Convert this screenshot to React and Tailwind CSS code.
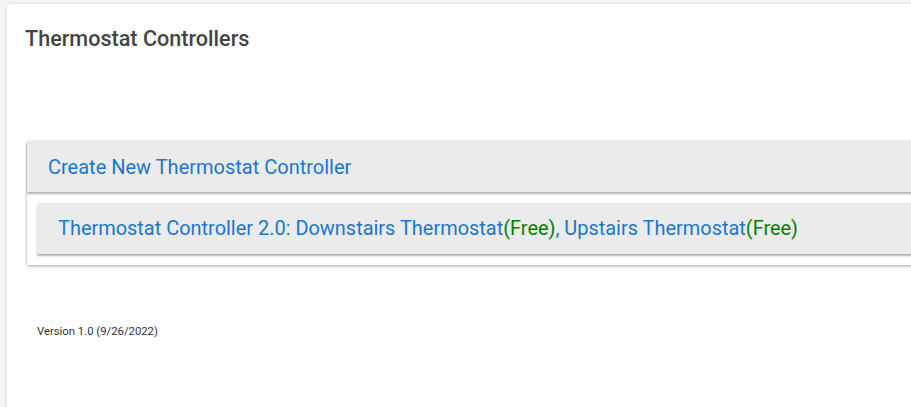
export default function App() {
  return (
    <div className="w-[911px] h-[407px] overflow-hidden bg-[#f4f4f4] pl-[7px] pt-[4px]" style={{ fontFamily: 'Roboto, "Liberation Sans", sans-serif' }}>
      <div className="w-[940px] h-[420px] bg-white rounded-[3px] shadow-[0_1px_4px_rgba(0,0,0,0.15)] pl-[18px] pt-[21px]">
        <h1 className="text-[21.6px] leading-[28px] font-medium text-[#444]">Thermostat Controllers</h1>
        <div className="mt-[88px] ml-[2px] bg-white shadow-[0_1px_3px_rgba(0,0,0,0.35)]">
          <div className="h-[51px] bg-[#ebebeb] flex items-center pl-[21px] shadow-[0_2px_2px_rgba(0,0,0,0.3)]">
            <span className="text-[20px] text-[#1976d2]">Create New Thermostat Controller</span>
          </div>
          <div className="px-[10px] py-[11px]">
            <div className="h-[51px] bg-[#ebebeb] flex items-center pl-[21px] rounded-[2px] shadow-[0_2px_2px_rgba(0,0,0,0.3)]">
              <span className="text-[19.95px] text-[#1976d2]">
                Thermostat Controller 2.0: Downstairs Thermostat<span className="text-[#008000]">(Free)</span>, Upstairs Thermostat<span className="text-[#008000]">(Free)</span>
              </span>
            </div>
          </div>
        </div>
        <p className="mt-[59px] ml-[12px] text-[11.3px] text-[#333]">Version 1.0 (9/26/2022)</p>
      </div>
    </div>
  );
}
